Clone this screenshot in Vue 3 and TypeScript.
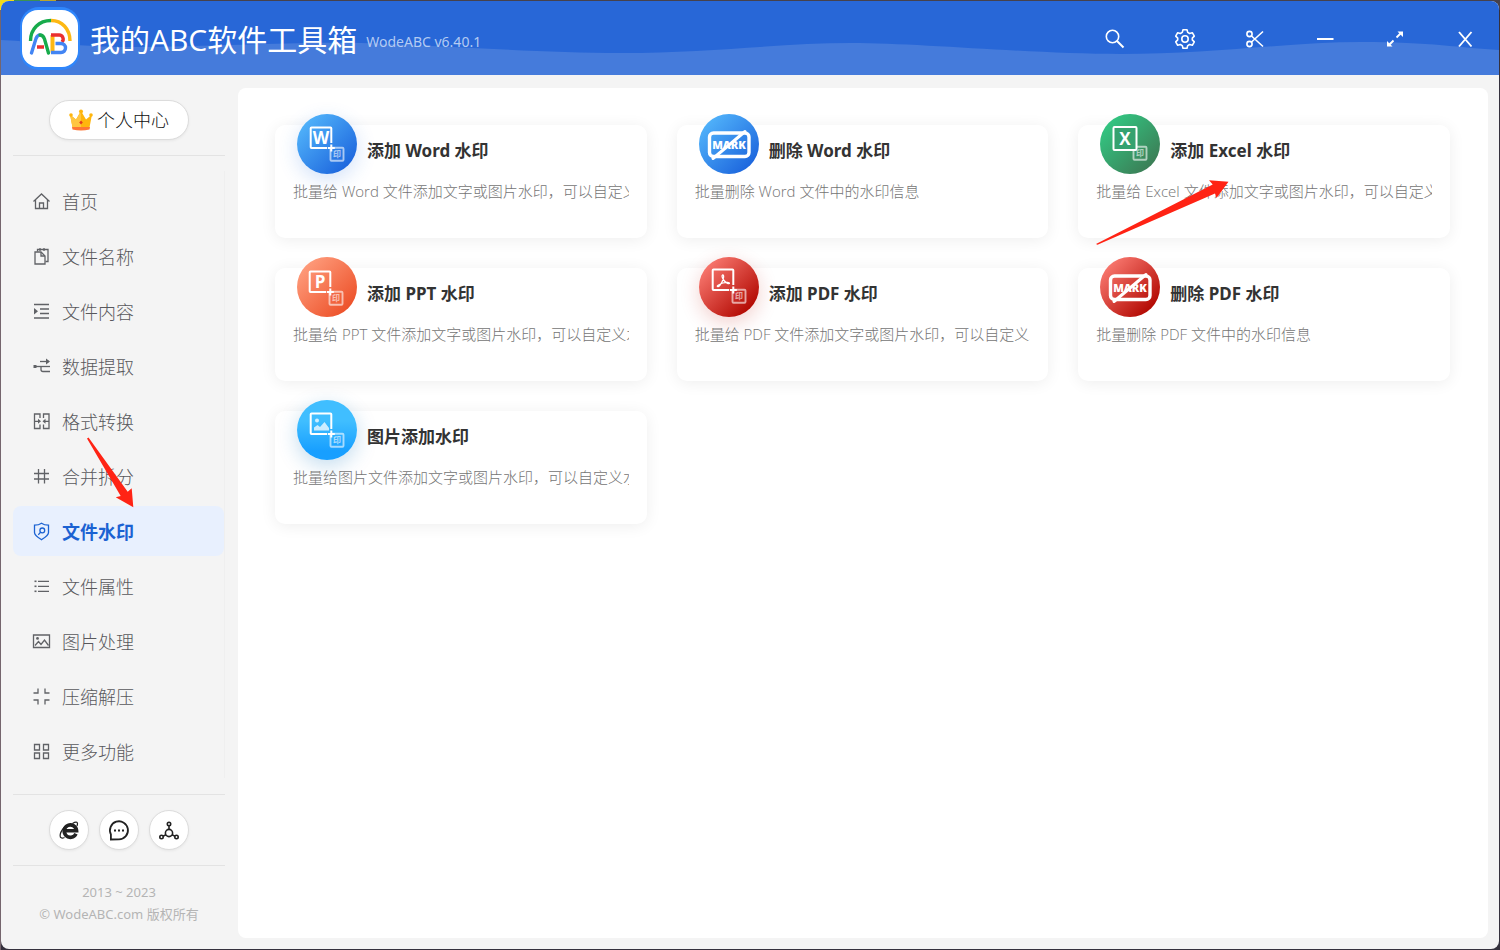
<script setup lang="ts">
type Glyph = 'W' | 'P' | 'X' | 'mark' | 'pdf' | 'image'

interface Tool {
  title: string
  desc: string
  glyph: Glyph
  tone: string
  shiftX: number
  shiftY: number
}

interface MenuItem {
  label: string
  paths: string[]
  fills?: string[]
}

const menu: MenuItem[] = [
  {
    label: '首页',
    paths: ['M1.5 9.5 9.5 2l8 7.5', 'M3.5 8v8.5h12V8', 'M7.5 16v-5h4v5'],
  },
  {
    label: '文件名称',
    paths: ['M3 5h6l4 4v8H3z', 'M9 5v4h4', 'M5.5 4.5v-2h10.5V14.5H13.5', 'M8 1v3M12 1v3'],
  },
  {
    label: '文件内容',
    paths: ['M2 2.5h15M8 7h9M8 11.5h9M2 16h15'],
    fills: ['M2 6l4 3.2-4 3.2z'],
  },
  {
    label: '数据提取',
    paths: ['M2 9.5h16', 'M8 4.5h9', 'M9 9.5v3a2 2 0 0 0 2 2h7'],
    fills: ['M14 1.5l4 3-4 3z', 'M1.5 8h3v3h-3z'],
  },
  {
    label: '格式转换',
    paths: ['M8 6V2H2.5v14.500H8v-4M11.500 6V2H17v14.500h-5.500v-4', 'M3 9.300h5M12 9.300h5'],
    fills: ['M6 6.800l3 2.500-3 2.500z', 'M13.500 6.800l-3 2.500 3 2.500z'],
  },
  { label: '合并拆分', paths: ['M6.5 2v14.5M12.5 2v14.5M2 6.5h15M2 12h15'] },
  {
    label: '文件水印',
    paths: [
      'M9.5 1.2c2 1.5 4.5 2 7 2V10.5c0 3-3.5 5-7 7.2-3.5-2.2-7-4.2-7-7.2V3.2c2.5 0 5-.5 7-2z',
      'M10.3 6a2.4 2.4 0 1 1 0 4.8 2.4 2.4 0 0 1 0-4.8zM8.5 10.2l-2.2 2.6',
    ],
  },
  {
    label: '文件属性',
    paths: ['M6 4.3h11M6 9.3h11M6 14.3h11'],
    fills: ['M2.5 3.5h2v1.600h-2z', 'M2.5 8.5h2v1.600h-2z', 'M2.5 13.5h2v1.600h-2z'],
  },
  {
    label: '图片处理',
    paths: ['M1.5 3h16v12.5h-16z', 'M3 13.5l3.5-4 2.5 3 3.5-4.500 4 5.5'],
    fills: ['M5.5 5a1.4 1.4 0 1 1 0 2.8 1.4 1.4 0 0 1 0-2.8z'],
  },
  {
    label: '压缩解压',
    paths: ['M6 1.5v4.500H1.5M13 1.5v4.500h4.500M6 17.5V13H1.5M13 17.5V13h4.5'],
  },
  {
    label: '更多功能',
    paths: ['M2.5 2.5h5v5.500h-5zM11.5 2.5h5v5.500h-5zM2.5 11h5v5.500h-5zM11.5 11h5v5.500h-5z'],
  },
]

const active = '文件水印'

const addNote = (subject: string) => `批量给${subject}文件添加文字或图片水印\uFF0C可以自定义水印`
const removeNote = (subject: string) => `批量删除${subject}文件中的水印信息`

const tools: Tool[] = [
  { title: '添加 Word 水印', desc: addNote(' Word '), glyph: 'W', tone: 'word glow', shiftX: 0, shiftY: 0 },
  { title: '删除 Word 水印', desc: removeNote(' Word '), glyph: 'mark', tone: 'word', shiftX: 0, shiftY: 0 },
  { title: '添加 Excel 水印', desc: addNote(' Excel '), glyph: 'X', tone: 'excel', shiftX: 0, shiftY: -1 },
  { title: '添加 PPT 水印', desc: addNote(' PPT '), glyph: 'P', tone: 'ppt', shiftX: -1, shiftY: 1 },
  { title: '添加 PDF 水印', desc: addNote(' PDF '), glyph: 'pdf', tone: 'pdf glow', shiftX: 0, shiftY: -1 },
  { title: '删除 PDF 水印', desc: removeNote(' PDF '), glyph: 'mark', tone: 'pdf', shiftX: 0, shiftY: 0 },
  { title: '图片添加水印', desc: addNote('图片'), glyph: 'image', tone: 'photo glow', shiftX: 0, shiftY: 0 },
]
</script>

<template>
  <div class="desktop">
    <div class="window">
      <header class="titlebar">
        <svg class="wave" viewBox="0 0 1498 74" preserveAspectRatio="none" aria-hidden="true">
          <path d="M0 39C40 41 90 47 150 46S300 41 360 42s170 10 260 10S780 42 850 42s180 11 270 11 170-12 240-12 100 6 138 8V74H0z" />
        </svg>
        <div class="brand">
          <svg class="logo" viewBox="0 0 60 63" aria-hidden="true">
            <rect x="0" y="0" width="60" height="63" rx="19" fill="#2f86fb" />
            <rect x="2" y="3" width="56" height="57" rx="16" fill="#fff" />
            <g fill="none" stroke-width="3.4">
              <path d="M10.5 34C10.5 22 19 13.500 31 13.500" stroke="#17ab4b" />
              <path d="M31 13.500C42 13.500 50 22 50 34" stroke="#fdb813" />
              <path d="M11.500 46L16 31.500Q17.500 28 20 28" stroke="#4285f4" stroke-linecap="round" />
              <path d="M20 28Q23 28 24.500 32L28.500 46" stroke="#17ab4b" stroke-linecap="round" />
              <path d="M17 40h7" stroke="#ea2f2f" />
              <path d="M32.500 45.500V28" stroke="#fdb813" stroke-width="4" />
              <path d="M31 28H39a4 4 0 0 1 2.800 7" stroke="#ea2f2f" />
              <path d="M35.500 36.500h5.500a4.400 4.400 0 0 1 0 9H31" stroke="#4285f4" />
            </g>
          </svg>
          <h1>我的ABC软件工具箱</h1>
          <span class="version">WodeABC v6.40.1</span>
        </div>
        <div class="actions">
          <button type="button" aria-label="搜索">
            <svg viewBox="0 0 22 22"><circle cx="8.500" cy="8.500" r="6.200" /><path d="M13 13l6.500 6.500" stroke-width="2" /></svg>
          </button>
          <button type="button" aria-label="设置">
            <svg viewBox="0 0 22 22">
              <path d="M9 1.700h4l.7 2.700 1.900 1.100 2.700-.8 2 3.400-2 2v1.800l2 2-2 3.400-2.700-.8-1.900 1.100-.7 2.700H9l-.7-2.700-1.900-1.100-2.700.8-2-3.400 2-2v-1.800l-2-2 2-3.400 2.700.8 1.900-1.100z" stroke-linejoin="round" />
              <circle cx="11" cy="11" r="3.200" />
            </svg>
          </button>
          <button type="button" aria-label="截图">
            <svg viewBox="0 0 22 22"><circle cx="5.500" cy="6" r="2.600" /><circle cx="5.500" cy="16" r="2.600" /><path d="M7.500 8l11.500 10.500M7.500 14L19 3.500" /></svg>
          </button>
          <button type="button" aria-label="最小化">
            <svg viewBox="0 0 22 22"><path d="M3 11h16.500" stroke-width="2" /></svg>
          </button>
          <button type="button" aria-label="最大化">
            <svg viewBox="0 0 22 22">
              <path d="M12.500 9.500l4.500-4.500M9.500 12.500L5 17" stroke-width="1.800" />
              <path d="M13.500 3.500H19V9zM3 13v5.500h5.500z" fill="#fff" stroke="none" />
            </svg>
          </button>
          <button type="button" aria-label="关闭">
            <svg viewBox="0 0 22 22"><path d="M5 4l12.500 14.500M17.500 4L5 18.500" stroke-width="1.900" /></svg>
          </button>
        </div>
      </header>

      <div class="body">
        <aside class="sidebar">
          <div class="account">
            <button type="button" class="pill">
              <svg class="crown" viewBox="0 0 24 22" aria-hidden="true">
                <path d="M1 5.500l6 5 5-8.500 5 8.500 6-5-2.500 13h-17z" fill="#ffb60d" />
                <path d="M1 5.500l6 5 5-8.500v16.500H3.500z" fill="#ffc640" />
                <path d="M3 18h18l-.5 2.500Q12 22.500 3.500 20.500z" fill="#ff7733" />
                <circle cx="12" cy="2.500" r="2" fill="#ffb60d" />
                <circle cx="2" cy="6" r="1.800" fill="#ffb60d" />
                <circle cx="22" cy="6" r="1.800" fill="#ffb60d" />
                <path d="M12 11.500l1.800 2-1.800 2-1.800-2z" fill="#e5391f" />
              </svg>
              <span>个人中心</span>
            </button>
          </div>

          <nav class="menu">
            <a v-for="m in menu" :key="m.label" href="#" :class="['item', { active: m.label === active }]">
              <svg viewBox="0 0 19 19" aria-hidden="true">
                <path v-for="p in m.paths" :key="p" :d="p" />
                <path v-for="f in m.fills" :key="f" :d="f" class="solid" />
              </svg>
              <span>{{ m.label }}</span>
            </a>
          </nav>

          <div class="links">
            <button type="button" aria-label="官方网站">
              <svg viewBox="0 0 22 22">
                <path d="M18 14.800a6.200 6.200 0 1 1 .6-3H7.500" stroke-width="3.600" />
                <path d="M14.500 4.500c4-2.500 6-1.500 4.500 2.500M6 8.500C1 14.500.5 21 6.500 18.500" stroke-width="1.200" />
              </svg>
            </button>
            <button type="button" aria-label="在线反馈">
              <svg viewBox="0 0 22 22">
                <path d="M2.900 20.500v-5.200A9 9 0 1 1 11 20.300z" stroke-width="1.800" />
                <path d="M6 11.500h2M10 11.500h2M14 11.500h2" stroke-width="2" />
              </svg>
            </button>
            <button type="button" aria-label="分享">
              <svg viewBox="0 0 22 22">
                <circle cx="11" cy="14" r="3.600" /><circle cx="11" cy="5" r="1.700" /><circle cx="3.500" cy="18" r="1.700" /><circle cx="18.500" cy="18" r="1.700" />
                <path d="M11 6.700v3.700M7.900 15.800l-2.900 1.400M14.100 15.800l2.900 1.400" />
              </svg>
            </button>
          </div>

          <footer class="legal">
            <div>2013 ~ 2023</div>
            <div>© WodeABC.com 版权所有</div>
          </footer>
        </aside>

        <main class="panel">
          <div class="grid">
            <button v-for="t in tools" :key="t.title" type="button" class="card">
              <span class="head">
                <span :class="['badge', t.tone]">
                  <svg v-if="t.glyph === 'mark'" viewBox="0 0 60 60" aria-hidden="true">
                    <rect x="10.500" y="19" width="39.500" height="23.500" rx="4" fill="none" stroke="#fff" stroke-width="3.400" />
                    <text x="30" y="34.500" text-anchor="middle" class="mark">MARK</text>
                    <path d="M14 44.500L46 17.500" stroke="#fff" stroke-width="3" stroke-linecap="round" />
                  </svg>
                  <svg v-else viewBox="0 0 60 60" aria-hidden="true">
                    <g :transform="`translate(${t.shiftX} ${t.shiftY})`">
                      <g opacity=".6">
                        <rect x="33.500" y="33.800" width="13" height="13" rx="1" fill="none" stroke="#fff" stroke-width="1.900" />
                        <text x="40" y="43.300" text-anchor="middle" class="seal">印</text>
                      </g>
                      <template v-if="t.glyph === 'X'">
                        <rect x="13.500" y="14" width="23" height="23" rx="1" fill="#35a26f" stroke="#fff" stroke-width="2" />
                        <text x="25" y="31.500" text-anchor="middle" class="letter">X</text>
                      </template>
                      <template v-else>
                        <path d="M30 34H14.500a.8.8 0 0 1-.8-.8V14.300a.8.8 0 0 1 .8-.8h19a.8.8 0 0 1 .8.8V29" fill="none" stroke="#fff" stroke-width="2" />
                        <path d="M34.300 30.500v7M30.800 34h7" stroke="#fff" stroke-width="2" />
                        <text v-if="t.glyph === 'W' || t.glyph === 'P'" x="24" y="29.500" text-anchor="middle" class="letter">{{ t.glyph }}</text>
                        <path v-else-if="t.glyph === 'pdf'" d="M23.500 19c2-.5 1 4-.5 7s-3.500 5-4.500 4.500 2-2.500 5.500-3.500 6.500-.8 6.500.3-3.500 0-5.500-2.800-2.500-5-1.500-5.500z" fill="none" stroke="#fff" stroke-width="1.300" />
                        <g v-else fill="#fff" opacity=".75">
                          <circle cx="20" cy="20.500" r="2" />
                          <path d="M17 30.500v-3l3.500-2.500 2.500 2 4.500-5 4.500 6v2.500z" />
                        </g>
                      </template>
                    </g>
                  </svg>
                </span>
                <strong>{{ t.title }}</strong>
              </span>
              <span class="desc">{{ t.desc }}</span>
            </button>
          </div>
        </main>
      </div>
    </div>

    <svg class="pointer menu-pointer" viewBox="0 0 48 71" aria-hidden="true">
      <path d="M0 1.500L1.500.500 40.700 54.700 44.700 51.300 46.300 70.300 28.700 60.300 33.700 59z" />
    </svg>
    <svg class="pointer card-pointer" viewBox="0 0 134 66" aria-hidden="true">
      <path d="M0 64L116.700 4.500 113 .300 132.500 1.800 120.500 18 119 13.500 1.500 64.800z" />
    </svg>
  </div>
</template>

<style>
body {
  margin: 0;
  background: #35313d;
}
</style>

<style scoped>
.desktop {
  position: relative;
  box-sizing: border-box;
  min-height: 100vh;
  padding: 1px;
  display: flex;
  background: linear-gradient(90deg, #f2dc18 0 14px, #3c9153 14px 40px, #b9a52b 40px 56px, #46414b 56px) top / 100% 10px no-repeat, linear-gradient(90deg, #75656d 0 1px, #35313d 1px);
  font-family: "Open Sans", "Noto Sans CJK SC", sans-serif;
  color: #333;
  overflow: hidden;
}

button {
  font: inherit;
  color: inherit;
  border: 0;
  padding: 0;
  background: none;
  cursor: pointer;
}

.window {
  flex: 1;
  min-width: 0;
  display: flex;
  flex-direction: column;
  background: #f4f4f4;
  border-radius: 8px;
  overflow: hidden;
}

.titlebar {
  position: relative;
  height: 74px;
  padding-left: 19px;
  display: flex;
  align-items: center;
  justify-content: space-between;
  background: #2867d7;
  color: #fff;
}

.wave {
  position: absolute;
  inset: 0;
  width: 100%;
  height: 100%;
}

.wave path {
  fill: #457bdb;
}

.brand {
  position: relative;
  display: flex;
  align-items: center;
}

.logo {
  width: 60px;
  height: 63px;
}

.brand h1 {
  margin: 0 9px 0 10px;
  padding-top: 4px;
  font-size: 30px;
  line-height: 40px;
  font-weight: 400;
}

.version {
  padding-top: 8px;
  font-family: "Noto Sans", "Open Sans", sans-serif;
  font-size: 14px;
  line-height: 20px;
  color: #b4cbf2;
}

.actions {
  position: relative;
  display: flex;
  gap: 2px;
  padding-top: 2px;
}

.actions button {
  width: 68px;
  height: 40px;
  display: grid;
  place-items: center;
}

.actions svg,
.links svg {
  width: 22px;
  height: 22px;
  fill: none;
  stroke: currentColor;
  stroke-width: 1.6;
}

.body {
  flex: 1;
  display: flex;
  padding: 13px 11px 11px 12px;
  gap: 13px;
}

.sidebar {
  width: 212px;
  flex: none;
  display: flex;
  flex-direction: column;
}

.account {
  padding: 12px 0 15px;
  display: flex;
  justify-content: center;
  border-bottom: 1px solid #e3e3e3;
}

.pill {
  box-sizing: border-box;
  width: 140px;
  height: 40px;
  display: flex;
  align-items: center;
  justify-content: center;
  gap: 4px;
  background: #fff;
  border: 1px solid #dcdcdc;
  border-radius: 20px;
  box-shadow: 0 1px 3px rgba(0, 0, 0, 0.06);
  font-size: 18px;
  font-weight: 300;
  line-height: 24px;
  color: #111;
}

.crown {
  width: 24px;
  height: 22px;
}

.menu {
  margin-top: 15px;
  padding: 5px 0 2px;
  display: flex;
  flex-direction: column;
  gap: 5px;
  border-right: 1px solid #efefef;
}

.item {
  height: 50px;
  padding-left: 19px;
  display: flex;
  align-items: center;
  gap: 11px;
  border-radius: 8px;
  color: #58585c;
  font-size: 18px;
  font-weight: 300;
  line-height: 26px;
  text-decoration: none;
}

.item span {
  padding-top: 2px;
}

.item svg {
  width: 19px;
  height: 19px;
  fill: none;
  stroke: #606266;
  stroke-width: 1.3;
}

.item .solid {
  fill: #606266;
  stroke: none;
}

.item.active {
  background: #e8f0fe;
  color: #1b62d2;
  font-weight: 700;
}

.item.active svg {
  stroke: #1b62d2;
}

.links {
  margin-top: 16px;
  padding: 15px 0;
  display: flex;
  justify-content: center;
  gap: 10px;
  border: solid #e3e3e3;
  border-width: 1px 0;
}

.links button {
  box-sizing: border-box;
  width: 40px;
  height: 40px;
  display: grid;
  place-items: center;
  background: #fff;
  border: 1px solid #dcdcdc;
  border-radius: 50%;
  box-shadow: 0 1px 3px rgba(0, 0, 0, 0.06);
  color: #222;
}

.legal {
  padding-top: 15px;
  font-family: "Noto Sans", "Noto Sans CJK SC", sans-serif;
  font-size: 13px;
  line-height: 22px;
  text-align: center;
  color: #b4b4b4;
}

.panel {
  flex: 1;
  min-width: 0;
  padding: 37px 38px 37px 37px;
  background: #fff;
  border-radius: 8px;
}

.grid {
  display: grid;
  grid-template-columns: repeat(3, minmax(0, 1fr));
  gap: 30px;
}

.card {
  display: flex;
  flex-direction: column;
  height: 113px;
  padding: 0 18px;
  background: #fff;
  border-radius: 10px;
  box-shadow: 0 2px 16px rgba(0, 0, 0, 0.07);
  text-align: left;
}

.head {
  display: flex;
  align-items: center;
  gap: 10px;
  margin-top: -11px;
  padding-left: 4px;
}

.head strong {
  padding-top: 13px;
  font-family: "Noto Sans", "Noto Sans CJK SC", sans-serif;
  font-size: 17px;
  line-height: 24px;
  font-weight: 700;
  color: #333;
  white-space: nowrap;
}

.badge {
  flex: none;
  width: 60px;
  height: 60px;
  border-radius: 50%;
}

.badge svg {
  display: block;
  width: 60px;
  height: 60px;
}

.badge text {
  fill: #fff;
  font-family: "Open Sans", "Noto Sans CJK SC", sans-serif;
  font-weight: 700;
}

.badge .letter {
  font-size: 17px;
}

.badge .mark {
  font-size: 11px;
  font-weight: 800;
}

.badge .seal {
  font-size: 8px;
}

.word {
  background: linear-gradient(135deg, #52b5fb 10%, #1b63dc 90%);
}

.word.glow {
  box-shadow: 0 6px 20px rgba(35, 110, 225, 0.2);
}

.excel {
  background: linear-gradient(135deg, #33c481 15%, #3c7a54 90%);
}

.ppt {
  background: linear-gradient(135deg, #ff9e7e 10%, #ec4e26 90%);
}

.pdf {
  background: linear-gradient(135deg, #fb7b72 10%, #b10700 88%);
}

.pdf.glow {
  box-shadow: 0 6px 20px rgba(190, 20, 10, 0.2);
}

.photo {
  background: linear-gradient(180deg, #40beff 35%, #189fff 85%);
}

.photo.glow {
  box-shadow: 0 6px 20px rgba(20, 120, 190, 0.25);
}

.desc {
  align-self: stretch;
  margin-top: 7px;
  font-size: 15px;
  line-height: 20px;
  font-weight: 300;
  color: #747474;
  white-space: nowrap;
  overflow: hidden;
}

.pointer {
  position: absolute;
  fill: #ff2314;
  pointer-events: none;
}

.menu-pointer {
  left: 87px;
  top: 437px;
  width: 48px;
  height: 71px;
}

.card-pointer {
  left: 1096px;
  top: 180px;
  width: 134px;
  height: 66px;
}
</style>
